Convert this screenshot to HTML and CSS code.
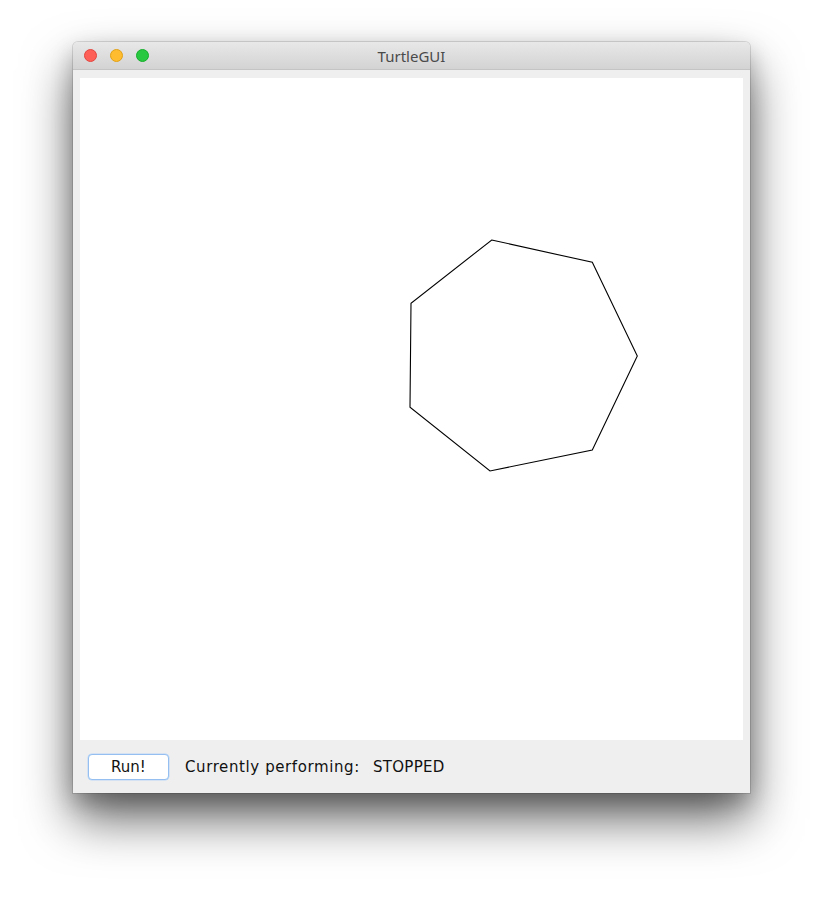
FILE: index.html
```html
<!DOCTYPE html>
<html>
<head>
<meta charset="utf-8">
<link rel="stylesheet" href="styles.css">
</head>
<body>
<div class="window">
  <div class="titlebar">
    <div class="lights">
      <span class="light red"></span>
      <span class="light yellow"></span>
      <span class="light green"></span>
    </div>
    <div class="title">TurtleGUI</div>
  </div>
  <div class="content">
    <div class="canvas">
      <svg class="drawing" width="663" height="662" viewBox="0 0 663 662">
        <polygon points="411.7,162 512.3,184.3 557.3,278 512.3,372 410,393 330,329.3 331,225.3" fill="none" stroke="#000" stroke-width="1.1"/>
      </svg>
    </div>
    <div class="controls">
      <button class="run">Run!</button>
      <span class="status"><span class="label">Currently performing:</span><span class="value">STOPPED</span></span>
    </div>
  </div>
</div>
</body>
</html>
```
FILE: styles.css
```css
html, body {
  margin: 0;
  padding: 0;
  background: #ffffff;
}
body {
  width: 823px;
  height: 897px;
  overflow: hidden;
  font-family: "DejaVu Sans", "Liberation Sans", sans-serif;
}
.window {
  margin: 42px 0 0 73px;
  width: 677px;
  height: 751px;
  background: #efefef;
  border-radius: 5px 5px 0 0;
  box-shadow: 0 0 0 1px rgba(0,0,0,0.12), 0 26px 50px rgba(0,0,0,0.6), 0 10px 22px rgba(0,0,0,0.22);
  display: flex;
  flex-direction: column;
  overflow: hidden;
}
.titlebar {
  height: 28px;
  flex: none;
  background: linear-gradient(#e9e8e9, #d4d3d4);
  border-bottom: 1px solid #c4c4c4;
  box-sizing: border-box;
  display: grid;
  grid-template-columns: 1fr;
  align-items: center;
}
.lights {
  grid-area: 1 / 1;
  display: flex;
  gap: 13px;
  padding-left: 11px;
  align-items: center;
}
.light {
  width: 13px;
  height: 13px;
  border-radius: 50%;
  box-sizing: border-box;
}
.red { background: #fe5f57; border: 1px solid #e2463f; }
.yellow { background: #febc2e; border: 1px solid #e1a116; }
.green { background: #28c840; border: 1px solid #14ae2a; }
.title {
  grid-area: 1 / 1;
  text-align: center;
  font-family: "Noto Sans", "Liberation Sans", sans-serif;
  font-size: 15px;
  color: #4a4a4a;
}
.content {
  flex: 1;
  display: flex;
  flex-direction: column;
  padding: 8px 7px 0 7px;
}
.canvas {
  width: 663px;
  height: 662px;
  background: #ffffff;
  flex: none;
}
.drawing {
  display: block;
}
.controls {
  flex: 1;
  display: flex;
  align-items: center;
  padding-left: 8px;
  gap: 16px;
}
.run {
  width: 81px;
  height: 26px;
  background: #ffffff;
  border: 1px solid #94bff0;
  border-radius: 4px;
  box-shadow: 0 0 0 0.5px #b9d6f7;
  font-family: "DejaVu Sans", "Liberation Sans", sans-serif;
  font-size: 15px;
  color: #111111;
  padding: 0;
}
.status {
  font-size: 15px;
  color: #111111;
  display: flex;
}
.label {
  letter-spacing: 0.6px;
}
.value {
  margin-left: 13px;
  letter-spacing: 0.3px;
}
```
